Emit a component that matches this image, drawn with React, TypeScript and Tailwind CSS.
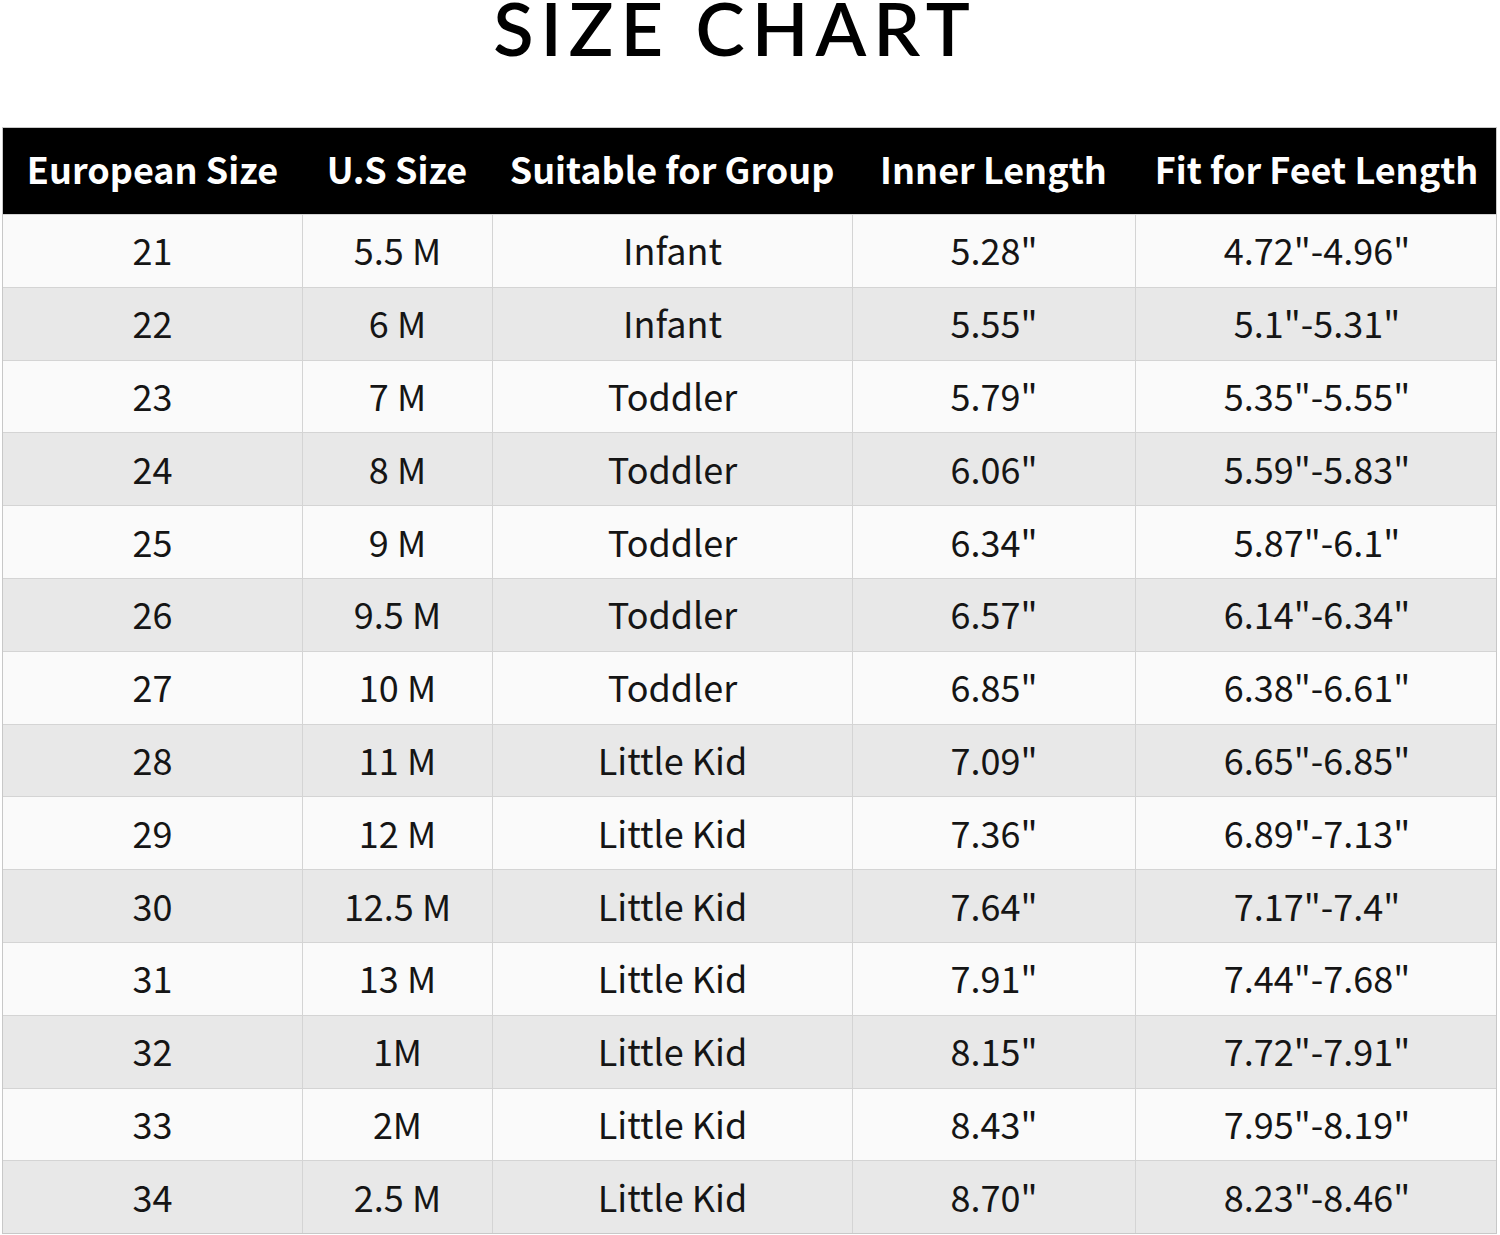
const rows: [string, string, string, string, string][] = [
  ['21', '5.5 M', 'Infant', '5.28"', '4.72"-4.96"'],
  ['22', '6 M', 'Infant', '5.55"', '5.1"-5.31"'],
  ['23', '7 M', 'Toddler', '5.79"', '5.35"-5.55"'],
  ['24', '8 M', 'Toddler', '6.06"', '5.59"-5.83"'],
  ['25', '9 M', 'Toddler', '6.34"', '5.87"-6.1"'],
  ['26', '9.5 M', 'Toddler', '6.57"', '6.14"-6.34"'],
  ['27', '10 M', 'Toddler', '6.85"', '6.38"-6.61"'],
  ['28', '11 M', 'Little Kid', '7.09"', '6.65"-6.85"'],
  ['29', '12 M', 'Little Kid', '7.36"', '6.89"-7.13"'],
  ['30', '12.5 M', 'Little Kid', '7.64"', '7.17"-7.4"'],
  ['31', '13 M', 'Little Kid', '7.91"', '7.44"-7.68"'],
  ['32', '1M', 'Little Kid', '8.15"', '7.72"-7.91"'],
  ['33', '2M', 'Little Kid', '8.43"', '7.95"-8.19"'],
  ['34', '2.5 M', 'Little Kid', '8.70"', '8.23"-8.46"'],
];

const headers = ['European Size', 'U.S Size', 'Suitable for Group', 'Inner Length', 'Fit for Feet Length'];

const cols = 'grid grid-cols-[299px_190px_360px_283px_363px]';

export default function App() {
  return (
    <div className="w-[1500px] h-[1235px] bg-white overflow-hidden">
      <div className="h-[127px] flex justify-center pr-[30px]">
        <h1 className="font-['Lato',sans-serif] text-[74px] leading-[56px] h-[60px] font-semibold tracking-[7px] text-black">
          SIZE CHART
        </h1>
      </div>
      <div className="ml-[2px] w-[1495px] border border-[#c8c8c8] font-['Noto_Sans_CJK_SC','Noto_Sans',sans-serif]">
        <div className={`${cols} h-[86px] bg-black text-white font-bold text-[36px] pb-[7px]`}>
          {headers.map((h) => (
            <div key={h} className="flex items-center justify-center whitespace-nowrap">
              {h}
            </div>
          ))}
        </div>
        {rows.map((r, i) => (
          <div
            key={r[0]}
            className={`${cols} h-[72.8px] border-t border-[#d4d4d4] text-[#151515] text-[36px] ${
              i % 2 === 0 ? 'bg-[#fafafa]' : 'bg-[#e8e8e8]'
            }`}
          >
            {r.map((c, j) => (
              <div
                key={j}
                className={`flex items-center justify-center pb-[3px] ${j > 0 ? 'border-l border-[#d4d4d4]' : ''}`}
              >
                {c}
              </div>
            ))}
          </div>
        ))}
      </div>
    </div>
  );
}
